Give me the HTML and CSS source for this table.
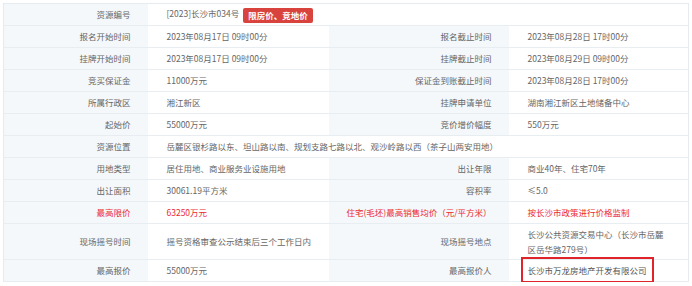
FILE: index.html
```html
<!DOCTYPE html>
<html lang="zh-CN">
<head>
<meta charset="utf-8">
<title>资源信息</title>
<link rel="stylesheet" href="styles.css">
</head>
<body>
<div class="wrap">
<table class="info">
  <colgroup>
    <col class="c1"><col class="c2"><col class="c3"><col class="c4">
  </colgroup>
  <tr>
    <th>资源编号</th>
    <td colspan="3">[2023]长沙市034号<span class="badge">限房价、竞地价</span></td>
  </tr>
  <tr>
    <th>报名开始时间</th><td>2023年08月17日 09时00分</td>
    <th>报名截止时间</th><td>2023年08月28日 17时00分</td>
  </tr>
  <tr>
    <th>挂牌开始时间</th><td>2023年08月17日 09时00分</td>
    <th>挂牌截止时间</th><td>2023年08月29日 09时00分</td>
  </tr>
  <tr>
    <th>竞买保证金</th><td>11000万元</td>
    <th>保证金到账截止时间</th><td>2023年08月28日 17时00分</td>
  </tr>
  <tr>
    <th>所属行政区</th><td>湘江新区</td>
    <th>挂牌申请单位</th><td>湖南湘江新区土地储备中心</td>
  </tr>
  <tr>
    <th>起始价</th><td>55000万元</td>
    <th>竞价增价幅度</th><td>550万元</td>
  </tr>
  <tr>
    <th>资源位置</th>
    <td colspan="3">岳麓区银杉路以东、坦山路以南、规划支路七路以北、观沙岭路以西（茶子山两安用地）</td>
  </tr>
  <tr>
    <th>用地类型</th><td>居住用地、商业服务业设施用地</td>
    <th>出让年限</th><td>商业40年、住宅70年</td>
  </tr>
  <tr>
    <th>出让面积</th><td>30061.19平方米</td>
    <th>容积率</th><td>≤5.0</td>
  </tr>
  <tr class="red">
    <th>最高限价</th><td>63250万元</td>
    <th>住宅(毛坯)最高销售均价（元/平方米）</th><td>按长沙市政策进行价格监制</td>
  </tr>
  <tr class="tall">
    <th>现场摇号时间</th><td>摇号资格审查公示结束后三个工作日内</td>
    <th>现场摇号地点</th><td>长沙公共资源交易中心（长沙市岳麓区岳华路279号）</td>
  </tr>
  <tr>
    <th>最高报价</th><td>55000万元</td>
    <th>最高报价人</th><td><span class="mark">长沙市万龙房地产开发有限公司</span></td>
  </tr>
</table>
</div>
</body>
</html>
```

FILE: styles.css
```css
html, body {
  margin: 0;
  padding: 0;
  background: #ffffff;
}

.wrap {
  padding: 3px 4px 0 3px;
}

.info {
  width: 685px;
  table-layout: fixed;
  border-collapse: collapse;
  border: 1px solid #e6ebf0;
  font-family: "Noto Sans CJK SC", "Microsoft YaHei", sans-serif;
  font-size: 8.5px;
  color: #666666;
}

.c1 { width: 144px; }
.c2 { width: 181px; }
.c3 { width: 180px; }
.c4 { width: 180px; }

.info th,
.info td {
  height: 22px;
  box-sizing: border-box;
  border-bottom: 1px solid #e8edf1;
  line-height: 15px;
  vertical-align: middle;
  padding: 0 20px 0 19px;
  white-space: normal;
}

.info td:nth-child(2) {
  padding-right: 6px;
}

.info th {
  font-weight: normal;
  text-align: right;
  background: #f4f8fb;
  padding: 0 17px 0 6px;
}

.info td {
  text-align: left;
  background: #ffffff;
}

.info tr.red th,
.info tr.red td {
  color: #ec2a2f;
}

.info tr.tall th,
.info tr.tall td {
  height: 36px;
}

.badge {
  display: inline-block;
  margin-left: 4px;
  padding: 0 5px;
  height: 15px;
  line-height: 15px;
  border-radius: 2px;
  background: #d9433d;
  color: #ffffff;
  font-weight: bold;
  vertical-align: middle;
}

.mark {
  display: inline-block;
  line-height: 12px;
  outline: 2px solid #e0242b;
  outline-offset: 5px;
  color: #555555;
}
```
